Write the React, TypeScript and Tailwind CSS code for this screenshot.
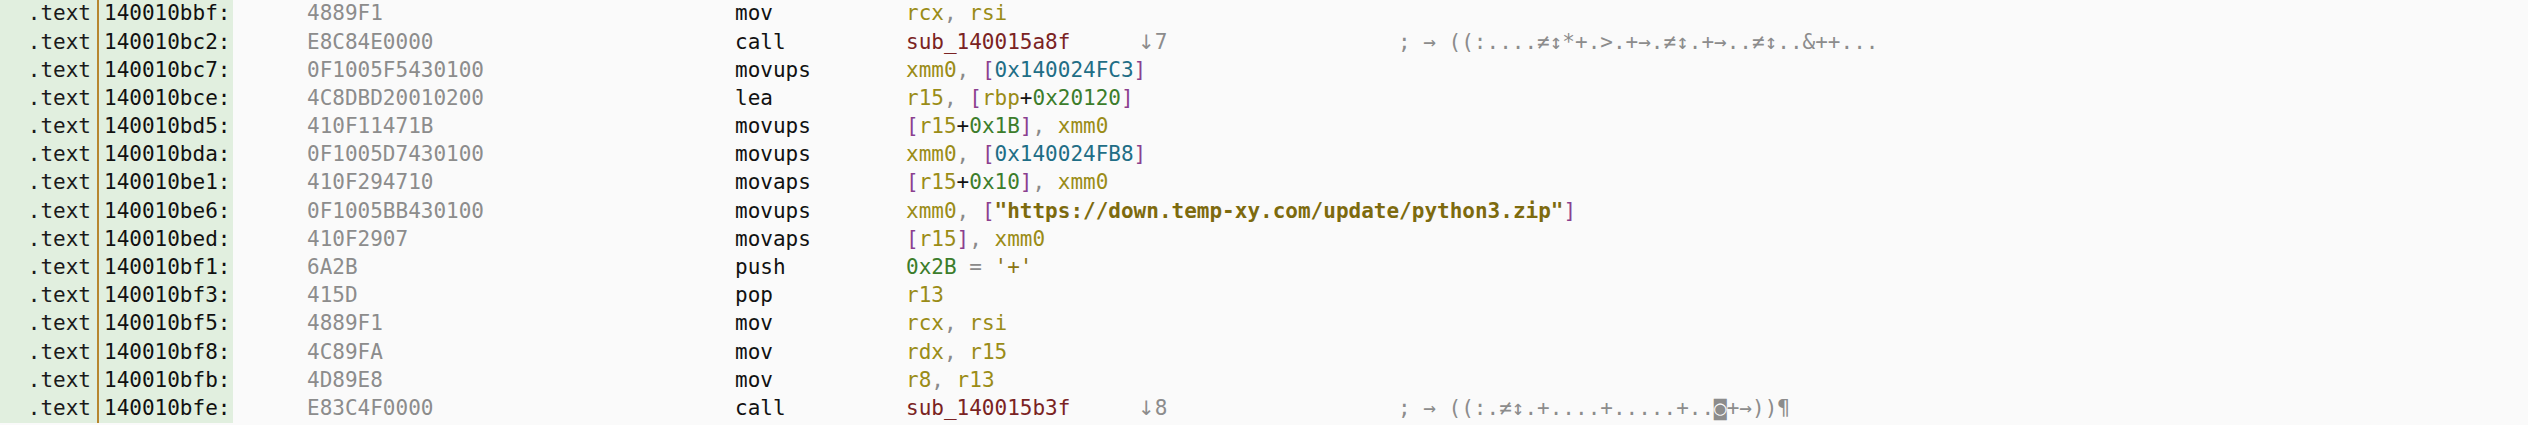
import type { ReactNode } from 'react';

// Colour tokens for the listing
const C = {
    reg: 'text-[#9a8c17]',
    punct: 'text-[#8a8a8a]',
    bracket: 'text-[#8b3f8f]',
    addr: 'text-[#1f6e86]',
    num: 'text-[#3c7d2b]',
    plus: 'text-[#111111]',
    str: 'text-[#7d6a0e] font-bold',
    chr: 'text-[#8a7412]',
    sub: 'text-[#7a2323]',
};

interface Row {
    addr: string;
    bytes: string;
    mnem: string;
    ops: ReactNode;
    xref?: string;
    comment?: string;
}

const R = (s: string) => <span className={C.reg}>{s}</span>;
const P = (s: string) => <span className={C.punct}>{s}</span>;
const B = (s: string) => <span className={C.bracket}>{s}</span>;
const N = (s: string) => <span className={C.num}>{s}</span>;
const A = (s: string) => <span className={C.addr}>{s}</span>;
const PLUS = <span className={C.plus}>+</span>;

const rows: Row[] = [
    { addr: '140010bbf', bytes: '4889F1', mnem: 'mov', ops: <>{R('rcx')}{P(', ')}{R('rsi')}</> },
    {
        addr: '140010bc2', bytes: 'E8C84E0000', mnem: 'call',
        ops: <span className={C.sub}>sub_140015a8f</span>,
        xref: '7',
        comment: '; → ((:....≠↕*+.>.+→.≠↕.+→..≠↕..&++...',
    },
    { addr: '140010bc7', bytes: '0F1005F5430100', mnem: 'movups', ops: <>{R('xmm0')}{P(', ')}{B('[')}{A('0x140024FC3')}{B(']')}</> },
    { addr: '140010bce', bytes: '4C8DBD20010200', mnem: 'lea', ops: <>{R('r15')}{P(', ')}{B('[')}{R('rbp')}{PLUS}{N('0x20120')}{B(']')}</> },
    { addr: '140010bd5', bytes: '410F11471B', mnem: 'movups', ops: <>{B('[')}{R('r15')}{PLUS}{N('0x1B')}{B(']')}{P(', ')}{R('xmm0')}</> },
    { addr: '140010bda', bytes: '0F1005D7430100', mnem: 'movups', ops: <>{R('xmm0')}{P(', ')}{B('[')}{A('0x140024FB8')}{B(']')}</> },
    { addr: '140010be1', bytes: '410F294710', mnem: 'movaps', ops: <>{B('[')}{R('r15')}{PLUS}{N('0x10')}{B(']')}{P(', ')}{R('xmm0')}</> },
    {
        addr: '140010be6', bytes: '0F1005BB430100', mnem: 'movups',
        ops: <>{R('xmm0')}{P(', ')}{B('[')}<span className={C.str}>"https://down.temp-xy.com/update/python3.zip"</span>{B(']')}</>,
    },
    { addr: '140010bed', bytes: '410F2907', mnem: 'movaps', ops: <>{B('[')}{R('r15')}{B(']')}{P(', ')}{R('xmm0')}</> },
    { addr: '140010bf1', bytes: '6A2B', mnem: 'push', ops: <>{N('0x2B')}{P(' = ')}<span className={C.chr}>'+'</span></> },
    { addr: '140010bf3', bytes: '415D', mnem: 'pop', ops: R('r13') },
    { addr: '140010bf5', bytes: '4889F1', mnem: 'mov', ops: <>{R('rcx')}{P(', ')}{R('rsi')}</> },
    { addr: '140010bf8', bytes: '4C89FA', mnem: 'mov', ops: <>{R('rdx')}{P(', ')}{R('r15')}</> },
    { addr: '140010bfb', bytes: '4D89E8', mnem: 'mov', ops: <>{R('r8')}{P(', ')}{R('r13')}</> },
    {
        addr: '140010bfe', bytes: 'E83C4F0000', mnem: 'call',
        ops: <span className={C.sub}>sub_140015b3f</span>,
        xref: '8',
        comment: '; → ((:.≠↕.+....+.....+..◙+→))¶',
    },
];

const App = () => {
    return (
        <div className="w-[2528px] h-[425px] overflow-hidden bg-[#fafafa] text-[21px] text-[#111111] whitespace-nowrap font-['DejaVu_Sans_Mono','Liberation_Mono',monospace]">
            {rows.map((r) => (
                <div key={r.addr} className="flex h-[28.2px] items-center">
                    <div className="flex h-full w-[233px] flex-none items-center bg-[#e1efdf]">
                        <span className="w-[91px] flex-none text-right text-[#1a1a1a]">.text</span>
                        <span className="ml-[6px] h-full border-l-2 border-[#b7862f]" />
                        <span className="pl-[5px] text-[#111111]">{r.addr}:</span>
                    </div>
                    <span className="ml-[74px] w-[428px] flex-none text-[#8c8c8c]">{r.bytes}</span>
                    <span className="w-[171px] flex-none">{r.mnem}</span>
                    <span className="w-[232px] flex-none">{r.ops}</span>
                    <span className="w-[260px] flex-none text-[#8c8c8c]">
                        {r.xref && (
                            <>
                                <span className="font-['DejaVu_Sans',sans-serif] text-[20px]">↓</span>
                                {r.xref}
                            </>
                        )}
                    </span>
                    <span className="flex-none text-[#8c8c8c]">{r.comment}</span>
                </div>
            ))}
        </div>
    );
};

export default App;
